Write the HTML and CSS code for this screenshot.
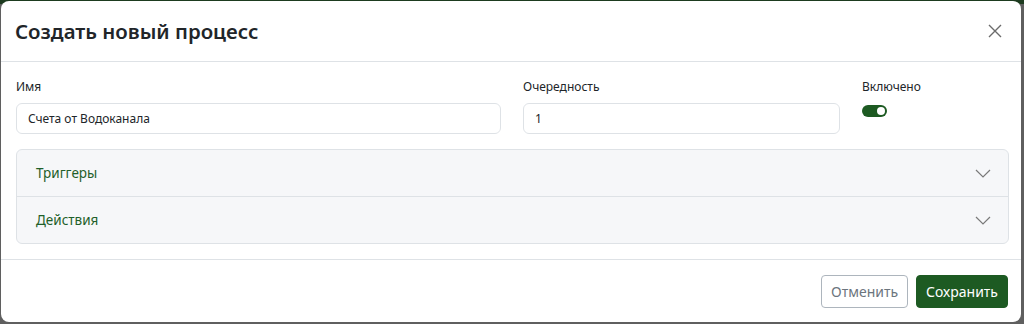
FILE: index.html
```html
<!DOCTYPE html>
<html lang="ru">
<head>
  <meta charset="UTF-8">
  <title>Создать новый процесс</title>
  <link rel="stylesheet" href="styles.css">
</head>
<body>
  <div class="modal">
    <div class="modal-header">
      <h5 class="modal-title">Создать новый процесс</h5>
      <button class="btn-close" aria-label="Закрыть">
        <svg width="14" height="14" viewBox="0 0 14 14"><path d="M1 1L13 13M13 1L1 13" stroke="#6b6b6b" stroke-width="1.4" fill="none"/></svg>
      </button>
    </div>

    <div class="modal-body">
      <div class="form-row">
        <div class="field">
          <label>Имя</label>
          <input type="text" class="form-control" value="Счета от Водоканала">
        </div>
        <div class="field">
          <label>Очередность</label>
          <input type="text" class="form-control" value="1">
        </div>
        <div class="field">
          <label>Включено</label>
          <div class="switch"><span class="knob"></span></div>
        </div>
      </div>

      <div class="accordion">
        <div class="accordion-item">
          <span>Триггеры</span>
          <svg width="16" height="9" viewBox="0 0 16 9"><path d="M1 1L8 8L15 1" stroke="#7a7a7a" stroke-width="1.2" fill="none"/></svg>
        </div>
        <div class="accordion-item">
          <span>Действия</span>
          <svg width="16" height="9" viewBox="0 0 16 9"><path d="M1 1L8 8L15 1" stroke="#7a7a7a" stroke-width="1.2" fill="none"/></svg>
        </div>
      </div>
    </div>

    <div class="modal-footer">
      <button class="btn btn-cancel">Отменить</button>
      <button class="btn btn-save">Сохранить</button>
    </div>
  </div>
</body>
</html>
```

FILE: styles.css
```css
body {
  margin: 0;
  height: 324px;
  font-family: 'Noto Sans', 'Open Sans', sans-serif;
  background: linear-gradient(to bottom, #1d3b1f 0, #1d3b1f 4px, #5f5f5f 4px);
  padding: 1px 3px 2px 1px;
  box-sizing: border-box;
}

.modal {
  background: white;
  border-radius: 8px;
  height: 321px;
  display: flex;
  flex-direction: column;
  overflow: hidden;
}

.modal-header {
  display: flex;
  align-items: center;
  justify-content: space-between;
  padding: 15px 16px 15px 14px;
  border-bottom: 1px solid #dee2e6;
}

.modal-title {
  margin: 0;
  font-size: 20.4px;
  font-weight: 600;
  line-height: 30px;
  color: #212529;
}

.btn-close {
  border: none;
  background: none;
  padding: 0;
  margin-right: 2px;
  width: 16px;
  height: 16px;
  display: flex;
  align-items: center;
  justify-content: center;
}

.modal-body {
  padding: 16px 12px 15px 15px;
  border-bottom: 1px solid #dee2e6;
}

.form-row {
  display: grid;
  grid-template-columns: 485px 317px 1fr;
  column-gap: 22px;
  margin-bottom: 15px;
}

.field label {
  display: block;
  font-size: 12px;
  line-height: 18px;
  color: #212529;
  margin-bottom: 7px;
}

.form-control {
  display: block;
  width: 100%;
  box-sizing: border-box;
  height: 31px;
  padding: 4px 11px;
  border: 1px solid #dee2e6;
  border-radius: 6px;
  font-family: inherit;
  font-size: 12px;
  color: #212529;
}

.switch {
  position: relative;
  width: 25px;
  height: 12px;
  margin-top: 9px;
  border-radius: 6px;
  background: #1d5a22;
}

.knob {
  position: absolute;
  right: 2px;
  top: 2px;
  width: 8px;
  height: 8px;
  border-radius: 50%;
  background: white;
}

.accordion {
  border: 1px solid #dee2e6;
  border-radius: 6px;
  background: #f6f7f9;
}

.accordion-item {
  display: flex;
  align-items: center;
  justify-content: space-between;
  height: 46px;
  padding: 0 17px 0 19px;
  font-size: 13.5px;
  color: #1f5f2a;
}

.accordion-item + .accordion-item {
  border-top: 1px solid #dee2e6;
}

.modal-footer {
  display: flex;
  justify-content: flex-end;
  gap: 8px;
  padding: 15px 13px 14px 16px;
}

.btn {
  font-family: inherit;
  font-size: 14px;
  height: 33px;
  padding: 0 9px;
  border-radius: 4px;
  cursor: pointer;
}

.btn-cancel {
  background: white;
  border: 1px solid #adb5bd;
  color: #6c757d;
}

.btn-save {
  background: #1d5a22;
  border: 1px solid #1d5a22;
  color: white;
}
```
